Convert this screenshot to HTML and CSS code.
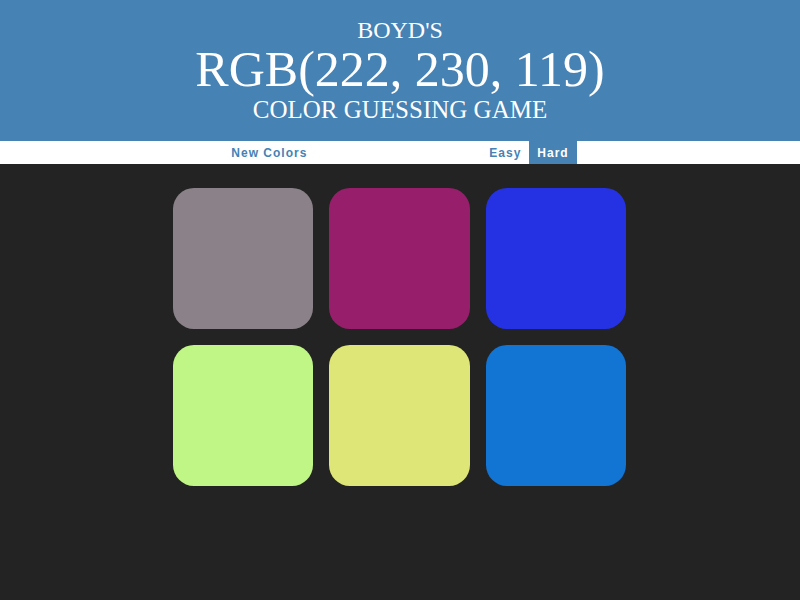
FILE: index.html
```html
<!DOCTYPE html>
<html lang="en">
<head>
<meta charset="utf-8">
<title>Color Game</title>
<link rel="stylesheet" href="styles.css">
</head>
<body>
<h1 class="title">
  <span class="title-small">Boyd's</span>
  <span class="title-rgb">RGB(222, 230, 119)</span>
  <span class="title-sub">Color Guessing Game</span>
</h1>
<div class="stripe">
  <button class="btn">New Colors</button>
  <span class="message"></span>
  <button class="btn">Easy</button>
  <button class="btn selected">Hard</button>
</div>
<div class="board">
  <div class="square sq1"></div>
  <div class="square sq2"></div>
  <div class="square sq3"></div>
  <div class="square sq4"></div>
  <div class="square sq5"></div>
  <div class="square sq6"></div>
</div>
</body>
</html>
```

FILE: styles.css
```css
html, body {
  margin: 0;
  padding: 0;
}
body {
  background: #232323;
  font-family: "Liberation Sans", Arial, sans-serif;
  height: 600px;
  overflow: hidden;
}
.title {
  margin: 0;
  padding: 17px 0 16px;
  background: #4682b4;
  color: #fff;
  font-family: "Liberation Serif", "Times New Roman", serif;
  font-weight: normal;
  text-align: center;
  text-transform: uppercase;
}
.title span {
  display: block;
}
.title-small {
  font-size: 24px;
  line-height: 26.4px;
}
.title-rgb {
  font-size: 50px;
  line-height: 52px;
}
.title-sub {
  font-size: 25px;
  line-height: 29.8px;
}
.stripe {
  background: #fff;
  height: 23px;
  display: flex;
  justify-content: center;
  align-items: stretch;
}
.btn {
  border: none;
  background: none;
  margin: 0;
  padding: 0 8px;
  font-family: "Liberation Sans", Arial, sans-serif;
  font-size: 12px;
  font-weight: 700;
  letter-spacing: 1px;
  color: #4682b4;
  height: 100%;
}
.selected {
  background: #4682b4;
  color: #fff;
}
.message {
  width: 166px;
}
.board {
  display: grid;
  grid-template-columns: repeat(3, 140.5px);
  grid-auto-rows: 140.5px;
  column-gap: 16px;
  row-gap: 16.5px;
  justify-content: center;
  margin-top: 24px;
  margin-left: -1px;
}
.square {
  border-radius: 21px;
}
.sq1 { background: rgb(138, 130, 136); }
.sq2 { background: rgb(150, 30, 106); }
.sq3 { background: rgb(36, 50, 228); }
.sq4 { background: rgb(192, 246, 133); }
.sq5 { background: rgb(222, 230, 119); }
.sq6 { background: rgb(18, 116, 211); }
```
